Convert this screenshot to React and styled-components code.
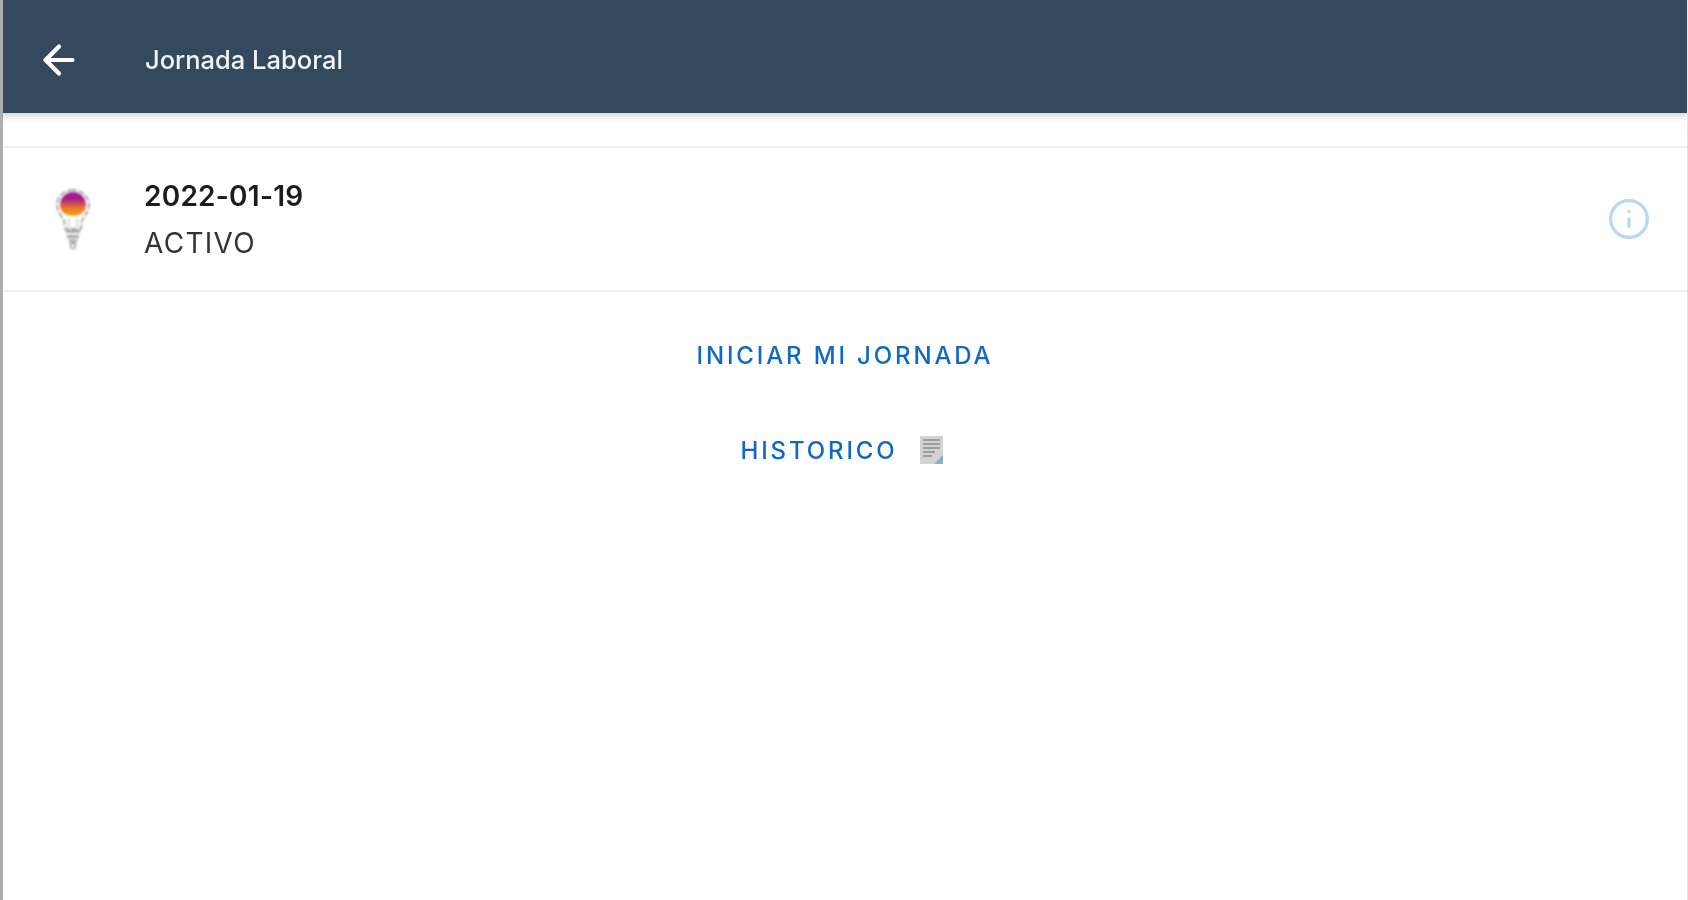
import React from 'react';
import styled, { createGlobalStyle } from 'styled-components';
import { ArrowLeft, Info } from 'lucide-react';

const GlobalStyle = createGlobalStyle`
  html, body {
    margin: 0;
    height: 100%;
    background: #fff;
    font-family: Inter, "Noto Sans", "Liberation Sans", sans-serif;
  }
  #root {
    height: 100%;
  }
`;

const Page = styled.div`
  height: 900px;
  overflow: hidden;
  display: flex;
  flex-direction: column;
  background: #fff;
  border-left: 3px solid #aeaeb0;
  border-right: 1px solid #e4e4e4;
  box-sizing: border-box;
`;

const Header = styled.header`
  height: 113px;
  flex: none;
  display: flex;
  align-items: center;
  background: #35495e;
  border-left: 3px solid #403d58;
  box-shadow: 0 3px 7px rgba(0, 0, 0, 0.18);
  color: #fff;
  box-sizing: border-box;
  margin-left: -3px;
  margin-right: -1px;
  padding: 6px 0 0 33px;
  z-index: 1;
`;

const BackButton = styled.span`
  display: flex;
  width: 109px;
  filter: blur(0.5px);
`;

const Title = styled.h1`
  margin: 0;
  font-size: 25.5px;
  font-weight: 500;
  color: #f2f4f6;
  filter: blur(0.7px);
`;

const StatusRow = styled.section`
  margin-top: 33px;
  height: 146px;
  flex: none;
  display: flex;
  align-items: center;
  border-top: 2px solid #efefef;
  border-bottom: 2px solid #efefef;
  box-sizing: border-box;
`;

const BulbSlot = styled.div`
  width: 141px;
  flex: none;
  padding-left: 52px;
  box-sizing: border-box;
  display: flex;
  filter: blur(0.8px);
`;

const StatusText = styled.div`
  flex: 1;
  padding-top: 2px;
  filter: blur(0.7px);
`;

const StatusDate = styled.div`
  font-size: 28px;
  font-weight: 600;
  letter-spacing: 0.25px;
  line-height: 47px;
  color: #1c1c1c;
`;

const StatusName = styled.div`
  font-size: 28px;
  letter-spacing: 1.3px;
  line-height: 47px;
  color: #333;
`;

const InfoSlot = styled.span`
  display: flex;
  color: #bcd7f5;
  margin-right: 36px;
  filter: blur(0.7px);
`;

const Actions = styled.div`
  display: flex;
  flex-direction: column;
  align-items: center;
  gap: 59px;
  padding-top: 45px;
`;

const ActionButton = styled.button`
  display: flex;
  align-items: center;
  gap: 21px;
  height: 36px;
  border: 0;
  padding: 0;
  margin-right: ${(p) => (p.$withIcon ? '6px' : '0')};
  background: none;
  font-family: inherit;
  font-size: 24px;
  font-weight: 500;
  letter-spacing: 2.85px;
  color: #0f68c8;
  filter: blur(0.6px);
`;

const BulbIcon = () => (
  <svg width="36" height="62" viewBox="0 0 36 62">
    <defs>
      <linearGradient id="bulbGlow" x1="0" y1="0" x2="0" y2="1">
        <stop offset="0" stopColor="#a01c92" />
        <stop offset="0.3" stopColor="#a8208a" />
        <stop offset="0.65" stopColor="#e8742a" />
        <stop offset="1" stopColor="#f0a818" />
      </linearGradient>
    </defs>
    <path
      d="M18 2C9 2 2 9 2 17c0 7 5 11 7 16 1 3 1 6 1 8h16c0-2 0-5 1-8 2-5 7-9 7-16 0-8-7-15-16-15z"
      fill="#fff"
      stroke="#a8a8a8"
      strokeWidth="2"
      strokeDasharray="6 2"
    />
    <path d="M5 17a13 13 0 0 1 26 0c0 7-6 11-13 11S5 24 5 17z" fill="url(#bulbGlow)" />
    <path d="M14 30v11M22 30v11" stroke="#cfcfcf" strokeWidth="1.5" fill="none" />
    <path d="M11 42h14v3H11zM12 47h12v3H12z" fill="#a8a8a8" />
    <path d="M13 51h10l-2 5h-6z" fill="#b5b5b5" />
    <circle cx="18" cy="58" r="2.5" fill="none" stroke="#aaa" strokeWidth="1.5" />
  </svg>
);

const DocIcon = () => (
  <svg width="25" height="30" viewBox="0 0 25 30">
    <rect x="1" y="1" width="23" height="28" fill="#d2d2d2" />
    <path d="M4 5h17M4 9h17M4 13h17M4 17h12M4 21h9" stroke="#8a8a8a" strokeWidth="1.6" />
    <path d="M15 29l9-9v9z" fill="#8fb0bd" />
  </svg>
);

export default function App() {
  return (
    <>
      <GlobalStyle />
      <Page>
        <Header>
          <BackButton>
            <ArrowLeft size={46} strokeWidth={2.2} />
          </BackButton>
          <Title>Jornada Laboral</Title>
        </Header>
        <StatusRow>
          <BulbSlot>
            <BulbIcon />
          </BulbSlot>
          <StatusText>
            <StatusDate>2022-01-19</StatusDate>
            <StatusName>ACTIVO</StatusName>
          </StatusText>
          <InfoSlot>
            <Info size={44} strokeWidth={1.8} />
          </InfoSlot>
        </StatusRow>
        <Actions>
          <ActionButton>INICIAR MI JORNADA</ActionButton>
          <ActionButton $withIcon>
            HISTORICO
            <DocIcon />
          </ActionButton>
        </Actions>
      </Page>
    </>
  );
}
